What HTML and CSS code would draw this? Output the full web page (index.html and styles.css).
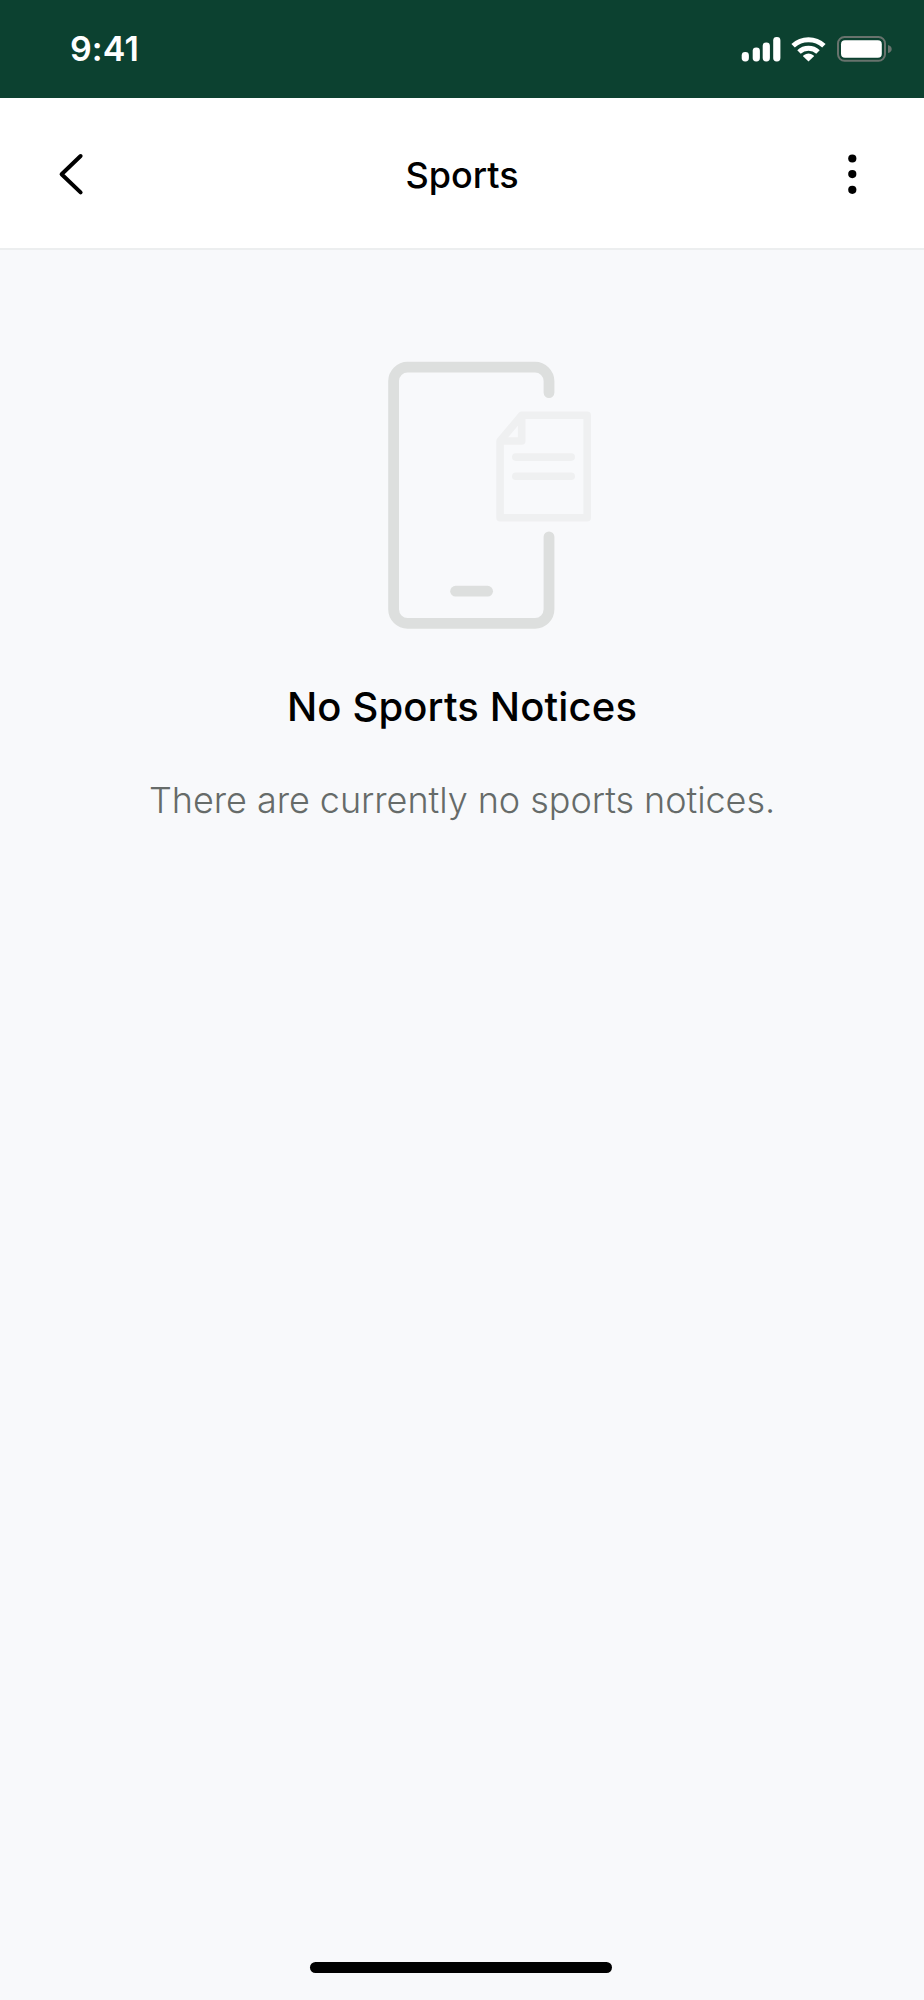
FILE: index.html
```html
<!DOCTYPE html>
<html lang="en">
<head>
<meta charset="utf-8">
<title>Sports</title>
<link rel="stylesheet" href="styles.css">
</head>
<body>
<div class="screen">
  <header class="status-bar">
    <span class="time">9:41</span>
    <svg class="status-icons" width="154" height="30" viewBox="740 34 154 30">
      <g fill="#fff">
        <rect x="741.7" y="52" width="7.2" height="9.4" rx="3.4"/>
        <rect x="752.7" y="47.4" width="7.2" height="14" rx="3.4"/>
        <rect x="762.7" y="42.4" width="7.2" height="19" rx="3.4"/>
        <rect x="773.2" y="37" width="7.2" height="24.4" rx="3.4"/>
        <path d="M808.5 61.6 L803.3 56.4 Q802.9 55.8 803.6 55.3 Q808.5 51.8 813.4 55.3 Q814.1 55.8 813.7 56.4 Z"/>
      </g>
      <g fill="none" stroke="#fff" stroke-width="5">
        <path d="M793.1 45.8 A22.4 22.4 0 0 1 823.9 45.8"/>
        <path d="M799 52 A13.8 13.8 0 0 1 818 52"/>
      </g>
      <rect x="838" y="37" width="47" height="23.8" rx="6.5" fill="none" stroke="#68736d" stroke-width="2"/>
      <rect x="841" y="40.2" width="40.8" height="17.6" rx="4" fill="#fff"/>
      <path d="M888 45 Q891.7 46 891.7 49 Q891.7 52 888 53 Z" fill="#68736d"/>
    </svg>
  </header>
  <nav class="nav-bar">
    <svg class="nav-icon" width="40" height="50" viewBox="50 149 40 50">
      <path d="M80.6 156 L61.6 174.2 L80.6 192.4" fill="none" stroke="#000" stroke-width="4" stroke-linecap="round" stroke-linejoin="round"/>
    </svg>
    <h1 class="nav-title">Sports</h1>
    <svg class="nav-icon" width="40" height="50" viewBox="834 149 40 50">
      <circle cx="852.3" cy="158.5" r="4.1"/><circle cx="852.3" cy="174.1" r="4.1"/><circle cx="852.3" cy="189.8" r="4.1"/>
    </svg>
  </nav>
  <main class="content">
    <svg class="illustration" width="206" height="270" viewBox="387 360 206 270">
      <g fill="none" stroke="#dddfde" stroke-width="10.8" stroke-linecap="round">
        <path d="M549 392.6 V381 A14 14 0 0 0 535 367.2 H407.6 A14 14 0 0 0 393.6 381 V609.3 A14 14 0 0 0 407.6 623.3 H535 A14 14 0 0 0 549 609.3 V536.8"/>
        <path d="M455.6 591.2 H487.6"/>
      </g>
      <g fill="none" stroke="#eff0f1" stroke-width="7.6" stroke-linejoin="round">
        <path d="M500.1 441 L521.7 415.2 H587.2 V517.8 H500.1 Z"/>
        <path d="M521.7 415.2 V441 H500.1"/>
        <path d="M515.8 457.1 H571.2 M515.8 476.2 H571.2" stroke-linecap="round"/>
      </g>
    </svg>
    <h2 class="empty-title">No Sports Notices</h2>
    <p class="empty-text">There are currently no sports notices.</p>
  </main>
  <footer class="home-area"><div class="home-indicator"></div></footer>
</div>
</body>
</html>
```
FILE: styles.css
```css
* { box-sizing: border-box; }

body {
  margin: 0;
  font-family: Inter, "Liberation Sans", sans-serif;
  color: #000;
}

.screen {
  display: flex;
  flex-direction: column;
  height: 2000px;
  background: #f8f9fb;
}

.status-bar {
  display: flex;
  justify-content: space-between;
  align-items: center;
  height: 98px;
  padding: 0 30px 0 70px;
  background: #0c4130;
}

.time {
  color: #fff;
  font-size: 34px;
  font-weight: 600;
  line-height: 40px;
  letter-spacing: 0.1px;
}

.nav-bar {
  display: flex;
  justify-content: space-between;
  align-items: center;
  height: 152px;
  padding: 1px 50px 0;
  background: #fff;
  border-bottom: 2px solid #eceeef;
}

.nav-icon { display: block; }

.nav-title {
  margin: 0;
  padding-top: 2px;
  font-size: 36px;
  font-weight: 500;
  line-height: 44px;
}

.content {
  display: flex;
  flex: 1;
  flex-direction: column;
  align-items: center;
  padding-top: 110px;
}

.illustration {
  display: block;
  margin-left: 56px;
}

.empty-title {
  margin: 52px 0 0;
  font-size: 40px;
  font-weight: 500;
  line-height: 50px;
  letter-spacing: 0.15px;
}

.empty-text {
  margin: 45px 0 0;
  color: #666b69;
  font-size: 36px;
  font-weight: 300;
  line-height: 46px;
  letter-spacing: -0.05px;
}

.home-area {
  padding: 0 312.5px 27px 310.3px;
}

.home-indicator {
  height: 11px;
  border-radius: 6px;
  background: #000;
}
```
